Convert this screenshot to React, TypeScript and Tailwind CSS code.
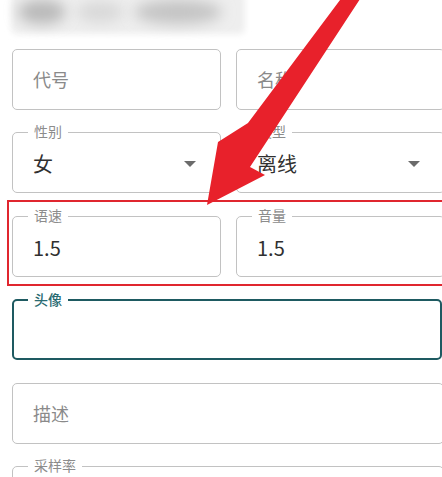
import React from "react";

const font = { fontFamily: '"Noto Sans CJK SC", "Noto Sans", Roboto, sans-serif' };

function Caret() {
  return (
    <svg width="12" height="7" viewBox="0 0 12 7" className="absolute right-[24px] top-[28px]">
      <path d="M0 0 L12 0 L6 6 Z" fill="#6b6b6b" />
    </svg>
  );
}

function Box({
  label,
  value,
  placeholder,
  caret,
  focused,
  className = "",
}: {
  label?: string;
  value?: string;
  placeholder?: string;
  caret?: boolean;
  focused?: boolean;
  className?: string;
}) {
  return (
    <div
      className={
        "relative h-[61px] rounded-[5px] " +
        (focused ? "border-2 border-[#1e5a61] " : "border border-[#c2c2c2] ") +
        className
      }
    >
      {label && (
        <span
          className={
            "absolute top-[-12px] bg-white px-[6px] text-[14px] leading-[20px] " +
            (focused ? "left-[14px] text-[#2a6b72] font-medium" : "left-[15px] text-[#8c8c8c]")
          }
        >
          {label}
        </span>
      )}
      {placeholder && (
        <div className="flex h-full items-center pl-[20px] text-[18px] text-[#8a8a8a]">{placeholder}</div>
      )}
      {value && (
        <div className="flex h-full items-center pl-[20px] pt-[3px] text-[20px] text-[#303030]">{value}</div>
      )}
      {caret && <Caret />}
    </div>
  );
}

function BlurredTitle() {
  return (
    <svg width="442" height="49" viewBox="0 0 442 49" className="block">
      <defs>
        <filter id="bl1" x="-20%" y="-50%" width="140%" height="200%">
          <feGaussianBlur stdDeviation="3" />
        </filter>
        <filter id="bl2" x="-50%" y="-100%" width="200%" height="300%">
          <feGaussianBlur stdDeviation="7" />
        </filter>
      </defs>
      <rect x="11" y="-8" width="234" height="42" rx="6" fill="#eeeeee" filter="url(#bl1)" />
      <ellipse cx="42" cy="12" rx="24" ry="12" fill="#b9b9b9" filter="url(#bl2)" />
      <ellipse cx="100" cy="12" rx="24" ry="10" fill="#d8d8d8" filter="url(#bl2)" />
      <ellipse cx="178" cy="12" rx="44" ry="12" fill="#c4c4c4" filter="url(#bl2)" />
    </svg>
  );
}

export default function App() {
  return (
    <div className="relative h-[477px] w-[442px] overflow-hidden bg-white" style={font}>
      <div className="h-[49px] overflow-hidden">
        <BlurredTitle />
      </div>

      <div className="flex flex-col gap-[22.4px] pl-[12px]" style={{ width: 445 }}>
        <div className="grid grid-cols-2 gap-[15px]">
          <Box placeholder="代号" />
          <Box placeholder="名称" />
        </div>
        <div className="grid grid-cols-2 gap-[15px]">
          <Box label="性别" value="女" caret />
          <Box label="类型" value="离线" caret />
        </div>
        <div className="grid grid-cols-2 gap-[15px]">
          <Box label="语速" value="1.5" />
          <Box label="音量" value="1.5" />
        </div>
        <Box label="头像" focused className="w-[430px]" />
        <Box placeholder="描述" className="w-[432px]" />
        <Box label="采样率" className="w-[432px]" />
      </div>

      {/* red highlight rectangle */}
      <div className="absolute left-[7px] top-[200px] h-[86px] w-[445px] border-2 border-[#e0262f]" />

      {/* red arrow */}
      <svg className="absolute left-0 top-0" width="442" height="477" viewBox="0 0 442 477">
        <polygon
          points="343,-4 362,-4 250,167 265,175 207,205 218,142 248,123"
          fill="#e8212b"
        />
      </svg>
    </div>
  );
}
